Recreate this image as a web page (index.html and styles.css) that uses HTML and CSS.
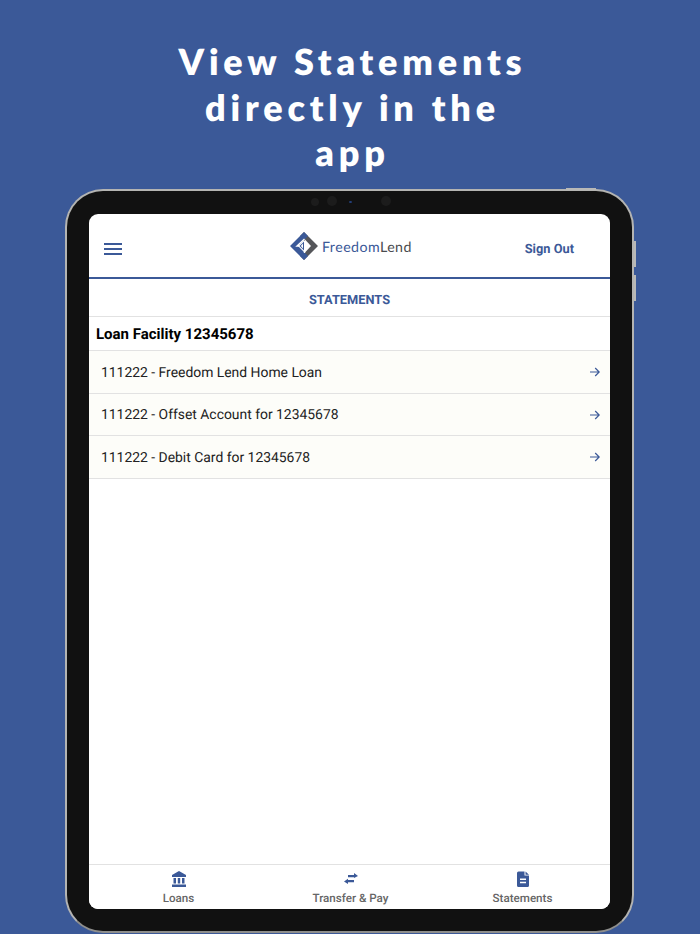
FILE: index.html
```html
<!DOCTYPE html>
<html lang="en">
<head>
<meta charset="utf-8">
<title>Statements</title>
<link rel="stylesheet" href="styles.css">
</head>
<body>
<main class="page">
  <h1 class="title">View Statements<br>directly in the<br>app</h1>
  <div class="device">
    <span class="btn btn-top"></span>
    <span class="btn btn-side1"></span>
    <span class="btn btn-side2"></span>
    <span class="cam cam1"></span>
    <span class="cam cam2"></span>
    <span class="cam cam3"></span>
    <span class="cam cam4"></span>
    <div class="screen">
      <header class="topbar">
        <svg class="menu" viewBox="0 0 18 12" width="18" height="12"><path d="M0 1h18M0 6h18M0 11h18" stroke="#3b5998" stroke-width="1.800" fill="none"/></svg>
        <div class="logo">
          <svg viewBox="0 0 28 28" width="28" height="28">
            <path d="M14 0L28 14L14 28L10 24L20 14L10 4Z" fill="#55565a"/>
            <path d="M14 0L0 14L14 28L18 24L8 14L18 4Z" fill="#3b5998"/>
            <path d="M15 7.500L21 14L15 20.500Z" fill="#fff"/>
            <path d="M14.500 7L7 14H14.500V21" fill="none" stroke="#fff" stroke-width="1.400"/>
            <path d="M14 9.500L9.500 14L14 18.500Z" fill="#3b5998"/>
            <path d="M13 11.500L10.800 14L13 16.500Z" fill="#fff"/>
          </svg>
          <span class="brand"><span class="brand-a">Freedom</span><span class="brand-b">Lend</span></span>
        </div>
        <a class="signout">Sign Out</a>
      </header>
      <div class="pagehead">STATEMENTS</div>
      <div class="facility">Loan Facility 12345678</div>
      <ul class="rows">
        <li class="row"><span>111222 - Freedom Lend Home Loan</span><svg viewBox="0 0 10 10" width="10" height="10"><path d="M0 5H9.200M5.200 1L9.200 5L5.200 9" stroke="#3b5998" stroke-width="1.200" fill="none"/></svg></li>
        <li class="row"><span>111222 - Offset Account for 12345678</span><svg viewBox="0 0 10 10" width="10" height="10"><path d="M0 5H9.200M5.200 1L9.200 5L5.200 9" stroke="#3b5998" stroke-width="1.200" fill="none"/></svg></li>
        <li class="row"><span>111222 - Debit Card for 12345678</span><svg viewBox="0 0 10 10" width="10" height="10"><path d="M0 5H9.200M5.200 1L9.200 5L5.200 9" stroke="#3b5998" stroke-width="1.200" fill="none"/></svg></li>
      </ul>
      <nav class="tabs">
        <div class="tab">
          <svg viewBox="0 0 14 16" width="14" height="16"><path d="M7 0L14 4V6H0V4ZM1.500 7H4V12.500H1.500ZM5.800 7H8.200V12.500H5.800ZM10 7H12.500V12.500H10ZM0 13.500H14V16H0Z" fill="#3b5998"/></svg>
          <span>Loans</span>
        </div>
        <div class="tab">
          <svg viewBox="0 0 14 16" width="14" height="16"><path d="M4 4H10V2L14 5L10 7V6.200H4ZM10 9H4V7.800L0 10.500L4 13V11.200H10Z" fill="#3b5998"/></svg>
          <span>Transfer &amp; Pay</span>
        </div>
        <div class="tab">
          <svg viewBox="0 0 12 16" width="12" height="16"><path d="M1.500 0.500H7.500V4.500H12V14.500Q12 16 10.500 16H1.500Q0 16 0 14.500V2Q0 0.500 1.500 0.500ZM8.500 0.500L12 3.700H8.500ZM3 7.500V9H9V7.500ZM3 10.800V12.300H9V10.800Z" fill="#3b5998" fill-rule="evenodd"/></svg>
          <span>Statements</span>
        </div>
      </nav>
    </div>
  </div>
</main>
</body>
</html>
```

FILE: styles.css
```css
* { box-sizing: border-box; }
html, body { margin: 0; height: 934px; overflow: hidden; }
body { background: #3b5998; font-family: Roboto, "Liberation Sans", sans-serif; text-rendering: geometricPrecision; }
.page { display: flex; flex-direction: column; align-items: center; height: 934px; }
.title {
  margin: 39px 0 0;
  padding-left: 5px;
  height: 150px;
  color: #fff;
  font-family: Lato, "Liberation Sans", sans-serif;
  font-weight: 800;
  font-size: 36px;
  line-height: 45.500px;
  letter-spacing: 4.800px;
  text-align: center;
}
.device {
  position: relative;
  width: 569px;
  height: 744px;
  margin-right: 1px;
  padding: 23px 22px;
  background: #111;
  border: 2px solid #b4b4b2;
  border-bottom-color: #8e8e8c;
  border-radius: 38px;
  flex: none;
}
.btn { position: absolute; background: #b9b9b7; }
.btn-top { top: -3px; right: 36px; width: 30px; height: 2px; }
.btn-side1 { top: 50px; right: -4px; width: 2px; height: 26px; }
.btn-side2 { top: 84px; right: -4px; width: 2px; height: 26px; }
.cam { position: absolute; border-radius: 50%; background: #1c1c1c; }
.cam1 { top: 7px; left: 244px; width: 8px; height: 8px; }
.cam2 { top: 5px; left: 260px; width: 10px; height: 10px; }
.cam3 { top: 10px; left: 282px; width: 3px; height: 2px; background: #24417e; }
.cam4 { top: 5px; left: 314px; width: 10px; height: 10px; }
.screen {
  display: flex;
  flex-direction: column;
  width: 521px;
  height: 695px;
  background: #fff;
  border-radius: 9px;
  overflow: hidden;
}
.topbar {
  position: relative;
  display: flex;
  align-items: center;
  justify-content: space-between;
  flex: none;
  height: 65px;
  padding: 8px 36px 0 15px;
  border-bottom: 2px solid #3b5998;
}
.menu { display: block; margin-top: -1px; }
.logo {
  position: absolute;
  left: 201px;
  top: 18px;
  display: flex;
  align-items: center;
  gap: 4px;
}
.brand { font-family: Lato, sans-serif; font-weight: 400; font-size: 14.200px; letter-spacing: 0.450px; margin-top: 2px; }
.brand-a { color: #3b5998; }
.brand-b { color: #4a4b4e; }
.signout { color: #3b5998; font-weight: 700; font-size: 12.800px; }
.pagehead {
  flex: none;
  height: 38px;
  padding-top: 5px;
  display: flex;
  align-items: center;
  justify-content: center;
  color: #3b5998;
  font-weight: 700;
  font-size: 12.800px;
  border-bottom: 1px solid #e2e2e2;
}
.facility {
  flex: none;
  height: 34px;
  padding: 1px 0 0 7px;
  display: flex;
  align-items: center;
  color: #000;
  font-weight: 700;
  font-size: 15px;
  border-bottom: 1px solid #e2e2e2;
}
.rows { list-style: none; margin: 0; padding: 0; flex: 1; }
.row {
  height: 42.600px;
  display: flex;
  align-items: center;
  justify-content: space-between;
  padding: 2px 10px 0 12px;
  background: #fdfdf9;
  color: #222;
  font-size: 13.900px;
  border-bottom: 1px solid #e2e2e2;
}
.row svg { margin-top: -1px; }
.tabs {
  flex: none;
  height: 45px;
  display: grid;
  grid-template-columns: repeat(3, 1fr);
  padding: 0 1.500px 0 3.500px;
  border-top: 1px solid #e2e2e2;
  background: #fff;
}
.tab {
  display: flex;
  flex-direction: column;
  align-items: center;
  padding-top: 6px;
  gap: 4px;
  color: #666;
  font-size: 11.600px;
  font-weight: 500;
  line-height: 15px;
}
.tab svg { display: block; }
```
